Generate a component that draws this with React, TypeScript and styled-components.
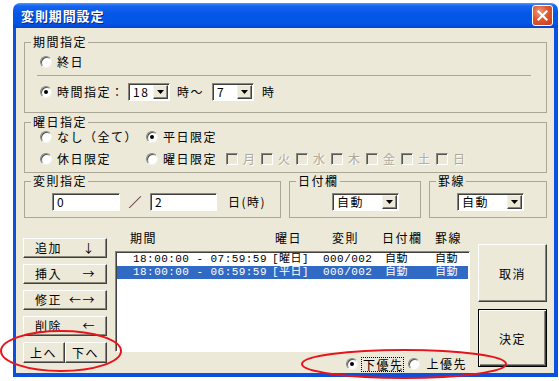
import React from "react";
import styled, { createGlobalStyle } from "styled-components";

const JP = `"Noto Sans CJK JP", "Noto Sans", sans-serif`;
const FACE = "#ECE9D8";
const FRAME = "#0B50DF";

const GlobalStyle = createGlobalStyle`
  html, body { margin: 0; padding: 0; background: #fff; }
  body { font-family: ${JP}; font-size: 12px; color: #000; overflow: hidden; }
  * { box-sizing: border-box; }
`;

const Page = styled.div`
  position: relative;
  width: 559px;
  height: 381px;
  padding: 3px 1px 4px 13px;
`;

const Window = styled.div`
  width: 545px;
  height: 374px;
  display: flex;
  flex-direction: column;
`;

const TitleBar = styled.div`
  height: 25px;
  flex: none;
  display: flex;
  align-items: center;
  justify-content: space-between;
  padding: 0 5px 0 8px;
  border-radius: 7px 7px 0 0;
  background: linear-gradient(
    180deg,
    #4a97ff 0%,
    #1664f0 12%,
    #0456e6 45%,
    #0355e6 80%,
    #0246d2 100%
  );
`;

const Title = styled.span`
  color: #fff;
  font-weight: 700;
  font-size: 13px;
  letter-spacing: 0.9px;
  line-height: 16px;
  text-shadow: 1px 1px 0 #0b2a8c;
`;

const CloseButton = styled.div`
  width: 21px;
  height: 21px;
  border: 1px solid #fff;
  border-radius: 3px;
  background: radial-gradient(circle at 35% 30%, #f39a7c 0%, #e0562e 45%, #c63e1c 100%);
  display: flex;
  align-items: center;
  justify-content: center;
`;

const Client = styled.div`
  flex: 1;
  background: ${FACE};
  border: solid ${FRAME};
  border-width: 0 4px 4px 3px;
  padding: 7px 7px 0 8px;
  display: flex;
  flex-direction: column;
`;

const Group = styled.fieldset<{ $w?: number; $mt?: number }>`
  margin: ${(p) => p.$mt ?? 0}px 0 0 0;
  padding: 0;
  min-width: 0;
  border: 1px solid #aaa797;
  flex: none;
  ${(p) => (p.$w ? `width: ${p.$w}px;` : "")}
`;

const Caption = styled.legend`
  margin-left: 6px;
  padding: 0 1px 0 2px;
  font-size: 12px;
  line-height: 14px;
  letter-spacing: 1.5px;
`;

const GroupBody = styled.div<{ $pt: number; $pb: number; $pl: number; $gap?: number }>`
  display: flex;
  flex-direction: column;
  gap: ${(p) => p.$gap ?? 0}px;
  padding: ${(p) => p.$pt}px 0 ${(p) => p.$pb}px ${(p) => p.$pl}px;
`;

const Row = styled.div<{ $h?: number; $mt?: number }>`
  display: flex;
  align-items: center;
  height: ${(p) => p.$h ?? 16}px;
  margin-top: ${(p) => p.$mt ?? 0}px;
`;

const Separator = styled.div`
  height: 1px;
  margin: 5px 15px 0 -3px;
  background: #aaa797;
`;

const Option = styled.label<{ $w?: number; $gap?: number }>`
  display: inline-flex;
  align-items: center;
  gap: ${(p) => p.$gap ?? 5}px;
  height: 16px;
  flex: none;
  white-space: nowrap;
  ${(p) => (p.$w ? `width: ${p.$w}px;` : "")}
`;

const RadioMark = styled.span<{ $on?: boolean }>`
  width: 12px;
  height: 12px;
  flex: none;
  border-radius: 50%;
  background: #fff;
  border: 1px solid;
  border-color: #8a887c #f4f3ee #f4f3ee #8a887c;
  box-shadow: inset 1px 1px 0 #555;
  display: inline-flex;
  align-items: center;
  justify-content: center;
  &::after {
    content: "";
    width: 4px;
    height: 4px;
    border-radius: 50%;
    background: ${(p) => (p.$on ? "#000" : "transparent")};
  }
`;

const CheckMark = styled.span`
  width: 12px;
  height: 12px;
  flex: none;
  background: ${FACE};
  border: 1px solid;
  border-color: #8a887c #fff #fff #8a887c;
  box-shadow: inset 1px 1px 0 #555;
`;

const Text = styled.span<{ $w?: number; $ml?: number; $dim?: boolean }>`
  flex: none;
  letter-spacing: 1.5px;
  line-height: 16px;
  white-space: nowrap;
  ${(p) => (p.$w !== undefined ? `width: ${p.$w}px;` : "")}
  ${(p) => (p.$ml !== undefined ? `margin-left: ${p.$ml}px;` : "")}
  ${(p) => (p.$dim ? `color: #aca899; text-shadow: 1px 1px 0 #fff;` : "")}
`;

const Field = styled.div<{ $w: number; $ml?: number }>`
  width: ${(p) => p.$w}px;
  margin-left: ${(p) => p.$ml ?? 0}px;
  height: 18px;
  flex: none;
  display: flex;
  background: #fff;
  border: 1px solid;
  border-color: #8a887c #fff #fff #8a887c;
  box-shadow: inset 1px 1px 0 #404040;
  padding: 1px;
`;

const FieldValue = styled.span`
  flex: 1;
  padding-left: 3px;
  font-size: 12px;
  line-height: 14px;
  letter-spacing: 1.5px;
  white-space: nowrap;
`;

const DropButton = styled.span`
  width: 15px;
  flex: none;
  background: ${FACE};
  border: 1px solid;
  border-color: #f4f3ee #404040 #404040 #f4f3ee;
  box-shadow: inset -1px -1px 0 #8a887c;
  display: flex;
  align-items: center;
  justify-content: center;
`;

const GroupRow = styled.div`
  display: flex;
  gap: 8px;
  margin-top: 1px;
`;

const Slash = styled.span`
  width: 30px;
  flex: none;
  text-align: center;
  font-size: 13px;
  line-height: 16px;
`;

const BottomArea = styled.div`
  display: flex;
  gap: 8px;
  margin-left: -1px;
  flex: 1;
`;

const ButtonColumn = styled.div<{ $w: number; $pt: number; $gap: number }>`
  width: ${(p) => p.$w}px;
  flex: none;
  display: flex;
  flex-direction: column;
  gap: ${(p) => p.$gap}px;
  padding-top: ${(p) => p.$pt}px;
`;

const ActionButton = styled.button`
  height: 20px;
  width: 100%;
  margin: 0;
  padding: 0 10px 0 11px;
  display: flex;
  align-items: center;
  justify-content: space-between;
  background: ${FACE};
  border: 1px solid;
  border-color: #fff #404040 #404040 #fff;
  box-shadow: inset -1px -1px 0 #8a887c;
  font-family: ${JP};
  font-size: 12px;
  letter-spacing: 1.5px;
  line-height: 16px;
  color: #000;
`;

const SplitRow = styled.div`
  display: flex;
  height: 21px;
`;

const SplitButton = styled(ActionButton)`
  height: 21px;
  flex: 1;
  width: auto;
  padding: 0 0 0 6px;
  justify-content: flex-start;
`;

const DialogButton = styled.button<{ $default?: boolean }>`
  width: 100%;
  height: 58px;
  margin: 0;
  padding: 0;
  background: ${FACE};
  font-family: ${JP};
  font-size: 12px;
  letter-spacing: 1.5px;
  color: #000;
  border: 1px solid;
  border-color: ${(p) => (p.$default ? "#000" : "#fff #404040 #404040 #fff")};
  box-shadow: ${(p) =>
    p.$default
      ? "inset 1px 1px 0 #fff, inset -1px -1px 0 #404040, inset -2px -2px 0 #8a887c"
      : "inset -1px -1px 0 #8a887c"};
`;

const ListColumn = styled.div`
  width: 355px;
  flex: none;
  display: flex;
  flex-direction: column;
`;

const ListHeader = styled.div`
  display: grid;
  grid-template-columns: 145px 57px 50px 53px auto;
  padding: 12px 0 0 15px;
  height: 28px;
  margin-bottom: 5px;
  line-height: 16px;
  letter-spacing: 1.5px;
  white-space: nowrap;
`;

const ListBox = styled.div`
  height: 101px;
  background: #fff;
  border: 1px solid;
  border-color: #8a887c #fff #fff #8a887c;
  box-shadow: inset 1px 1px 0 #404040;
  padding: 1px 1px 0 1px;
`;

const ListRow = styled.div<{ $selected?: boolean }>`
  display: grid;
  grid-template-columns: 139px 51px 62px 50px auto;
  padding-left: 16px;
  height: 13px;
  line-height: 13px;
  font-family: "Liberation Mono", "Noto Sans CJK JP", monospace;
  font-size: 11px;
  letter-spacing: 0.45px;
  white-space: nowrap;
  background: ${(p) => (p.$selected ? "#316ac5" : "transparent")};
  color: ${(p) => (p.$selected ? "#fff" : "#000")};
`;

const PriorityRow = styled.div`
  display: flex;
  align-items: center;
  justify-content: flex-end;
  height: 16px;
  margin-top: 4px;
  padding-right: 3px;
`;

const FocusLabel = styled.span`
  border: 1px dotted #000;
  height: 15px;
  padding: 0 0 0 1px;
  line-height: 13px;
  letter-spacing: 1.5px;
  margin-right: 4px;
  white-space: nowrap;
`;

const Annotations = styled.svg`
  position: absolute;
  left: 0;
  top: 0;
  width: 559px;
  height: 381px;
  pointer-events: none;
`;

const Arrow = () => (
  <svg width="7" height="4" viewBox="0 0 7 4">
    <polygon points="0,0 7,0 3.5,4" fill="#000" />
  </svg>
);

const Combo = ({ value, w, ml }: { value: string; w: number; ml?: number }) => (
  <Field $w={w} $ml={ml}>
    <FieldValue>{value}</FieldValue>
    <DropButton>
      <Arrow />
    </DropButton>
  </Field>
);

const weekdays = ["月", "火", "水", "木", "金", "土", "日"];

const rows = [
  { period: "18:00:00 - 07:59:59", day: "[曜日]", rule: "000/002", date: "自動", line: "自動" },
  { period: "18:00:00 - 06:59:59", day: "[平日]", rule: "000/002", date: "自動", line: "自動", selected: true },
];

export default function App() {
  return (
    <>
      <GlobalStyle />
      <Page>
        <Window>
          <TitleBar>
            <Title>変則期間設定</Title>
            <CloseButton>
              <svg width="11" height="11" viewBox="0 0 11 11">
                <path d="M1.5 1.5 L9.5 9.5 M9.5 1.5 L1.5 9.5" stroke="#fff" strokeWidth="2.2" strokeLinecap="square" />
              </svg>
            </CloseButton>
          </TitleBar>
          <Client>
            <Group>
              <Caption>期間指定</Caption>
              <GroupBody $pt={5} $pb={11} $pl={15}>
                <Row>
                  <Option>
                    <RadioMark />
                    <Text>終日</Text>
                  </Option>
                </Row>
                <Separator />
                <Row $h={18} $mt={7}>
                  <Option>
                    <RadioMark $on />
                    <Text $w={71}>時間指定：</Text>
                  </Option>
                  <Combo value="18" w={42} />
                  <Text $ml={7} $w={35}>時～</Text>
                  <Combo value="7" w={42} />
                  <Text $ml={8}>時</Text>
                </Row>
              </GroupBody>
            </Group>

            <Group $mt={2}>
              <Caption>曜日指定</Caption>
              <GroupBody $pt={0} $pb={5} $pl={15} $gap={6}>
                <Row>
                  <Option $w={106}>
                    <RadioMark />
                    <Text>なし（全て）</Text>
                  </Option>
                  <Option>
                    <RadioMark $on />
                    <Text>平日限定</Text>
                  </Option>
                </Row>
                <Row>
                  <Option $w={106}>
                    <RadioMark />
                    <Text>休日限定</Text>
                  </Option>
                  <Option $w={80}>
                    <RadioMark />
                    <Text>曜日限定</Text>
                  </Option>
                  {weekdays.map((d) => (
                    <Option key={d} $w={35}>
                      <CheckMark />
                      <Text $dim>{d}</Text>
                    </Option>
                  ))}
                </Row>
              </GroupBody>
            </Group>

            <GroupRow>
              <Group $w={257}>
                <Caption>変則指定</Caption>
                <GroupBody $pt={5} $pb={6} $pl={27}>
                  <Row $h={18}>
                    <Field $w={68}>
                      <FieldValue>0</FieldValue>
                    </Field>
                    <Slash>／</Slash>
                    <Field $w={67}>
                      <FieldValue>2</FieldValue>
                    </Field>
                    <Text $ml={11}>日(時)</Text>
                  </Row>
                </GroupBody>
              </Group>
              <Group $w={132}>
                <Caption>日付欄</Caption>
                <GroupBody $pt={5} $pb={6} $pl={42}>
                  <Row $h={18}>
                    <Combo value="自動" w={67} />
                  </Row>
                </GroupBody>
              </Group>
              <Group $w={118}>
                <Caption>罫線</Caption>
                <GroupBody $pt={5} $pb={6} $pl={27}>
                  <Row $h={18}>
                    <Combo value="自動" w={67} />
                  </Row>
                </GroupBody>
              </Group>
            </GroupRow>

            <BottomArea>
              <ButtonColumn $w={84} $pt={20} $gap={6}>
                <ActionButton>
                  <span>追加</span>
                  <span>↓</span>
                </ActionButton>
                <ActionButton>
                  <span>挿入</span>
                  <span>→</span>
                </ActionButton>
                <ActionButton>
                  <span>修正</span>
                  <span>←→</span>
                </ActionButton>
                <ActionButton>
                  <span>削除</span>
                  <span>←</span>
                </ActionButton>
                <SplitRow>
                  <SplitButton>上へ</SplitButton>
                  <SplitButton>下へ</SplitButton>
                </SplitRow>
              </ButtonColumn>

              <ListColumn>
                <ListHeader>
                  <span>期間</span>
                  <span>曜日</span>
                  <span>変則</span>
                  <span>日付欄</span>
                  <span>罫線</span>
                </ListHeader>
                <ListBox>
                  {rows.map((r, i) => (
                    <ListRow key={i} $selected={r.selected}>
                      <span>{r.period}</span>
                      <span>{r.day}</span>
                      <span>{r.rule}</span>
                      <span>{r.date}</span>
                      <span>{r.line}</span>
                    </ListRow>
                  ))}
                </ListBox>
                <PriorityRow>
                  <Option $gap={3}>
                    <RadioMark $on />
                    <FocusLabel>下優先</FocusLabel>
                  </Option>
                  <Option $gap={6}>
                    <RadioMark />
                    <Text>上優先</Text>
                  </Option>
                </PriorityRow>
              </ListColumn>

              <ButtonColumn $w={69} $pt={26} $gap={7}>
                <DialogButton>取消</DialogButton>
                <DialogButton $default>決定</DialogButton>
              </ButtonColumn>
            </BottomArea>
          </Client>
        </Window>
        <Annotations viewBox="0 0 559 381">
          <ellipse cx="61" cy="351" rx="60" ry="20" fill="none" stroke="#e8141c" strokeWidth="2" />
          <ellipse cx="404" cy="364" rx="102" ry="14" fill="none" stroke="#e8141c" strokeWidth="2" />
        </Annotations>
      </Page>
    </>
  );
}
